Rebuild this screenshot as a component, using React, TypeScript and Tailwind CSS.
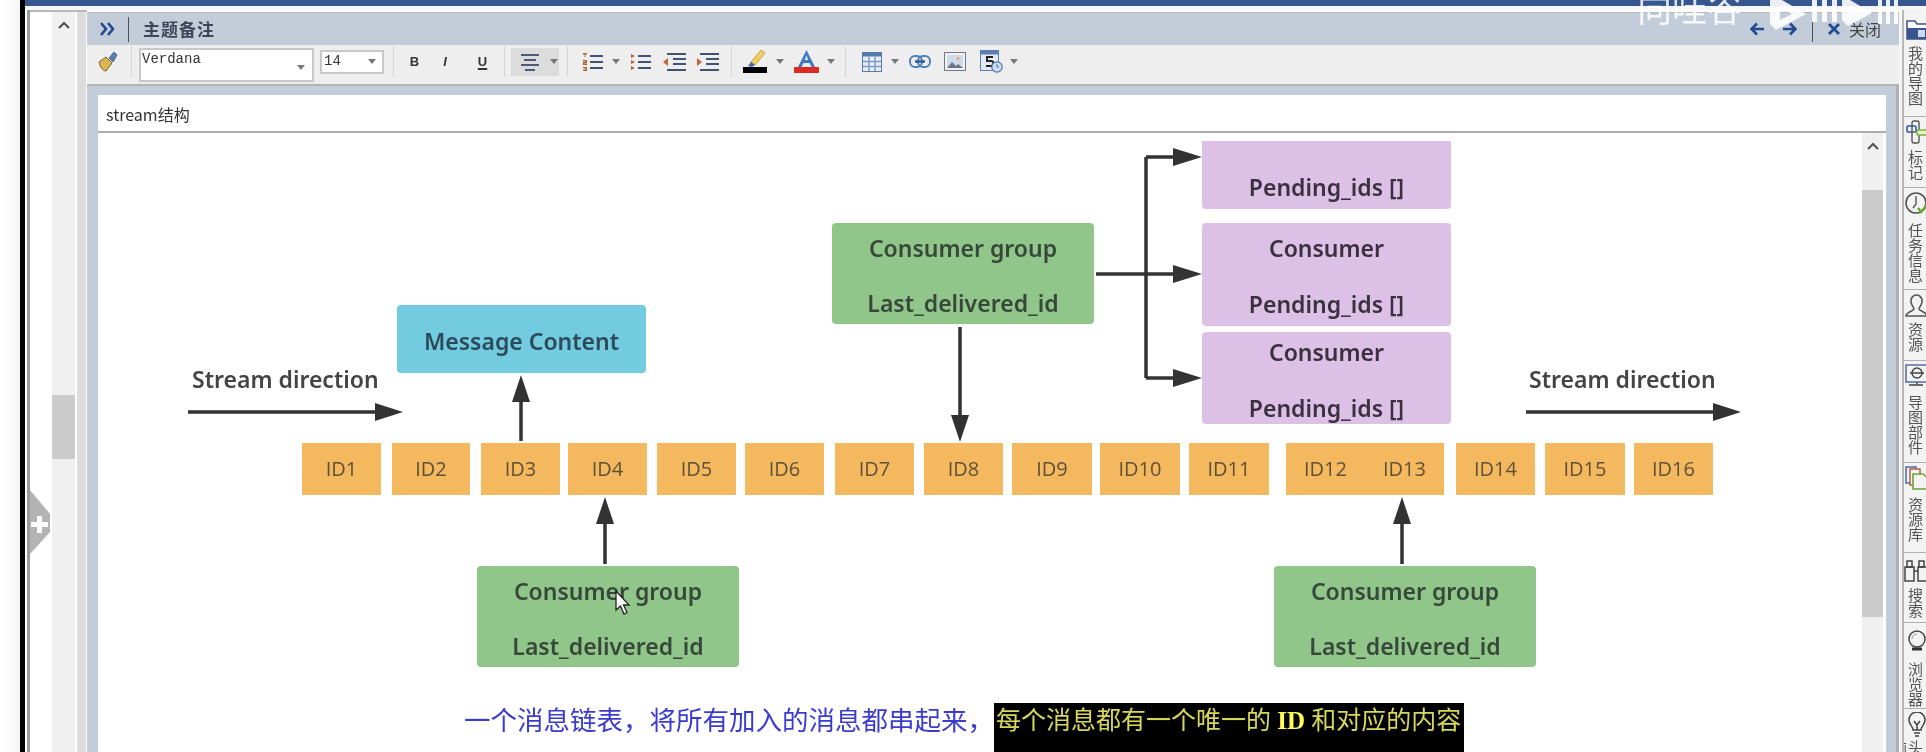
import React from "react";

const Caret = ({ className = "" }: { className?: string }) => (
  <svg width="8" height="5" viewBox="0 0 8 5" className={`shrink-0 ${className}`}><path d="M0 0h8L4 5z" fill="#777" /></svg>
);
const Sep = ({ className = "" }: { className?: string }) => <div className={`w-px h-[31px] bg-[#d4d4d4] shrink-0 ${className}`} />;

const Broom = () => (
  <svg width="20" height="22" viewBox="0 0 20 22" className="ml-[11px] shrink-0">
    <path d="M1 11l7-5 6 6-6 8C5 20 2 16 1 11z" fill="#d9b64f" stroke="#776330" strokeWidth="1" />
    <path d="M11 7l5-6 3 3-4 7z" fill="#5f7fb0" stroke="#36527f" strokeWidth="0.8" />
  </svg>
);
const Lines = ({ kind }: { kind: "center" | "num" | "bul" | "out" | "in" }) => {
  if (kind === "center")
    return (
      <svg width="20" height="20" viewBox="0 0 20 20" className="ml-[9px] shrink-0" stroke="#4a5c78" strokeWidth="2">
        <path d="M1 3h18M4 8h12M1 13h18M5 18h10" />
      </svg>
    );
  if (kind === "num" || kind === "bul")
    return (
      <svg width="21" height="20" viewBox="0 0 21 20" className="shrink-0">
        <g stroke="#3f5270" strokeWidth="2"><path d="M8 4h13M8 10h13M8 16h13" /></g>
        <g fill="#b5623a">
          {kind === "num" ? (
            <>
              <path d="M1 1h4v1.500H3.500V5h-1V2.500H1z" />
              <path d="M1 8h4v3H2.500v.500H5V13H1v-3h2.500v-.500H1z" />
              <path d="M1 15h4v4H1v-1h2.500v-.500H1.500v-1h2v-.500H1z" />
            </>
          ) : (
            <>
              <path d="M1 2l4 2-4 2z" />
              <path d="M1 8l4 2-4 2z" />
              <path d="M1 14l4 2-4 2z" />
            </>
          )}
        </g>
      </svg>
    );
  return (
    <svg width="23" height="20" viewBox="0 0 23 20" className="shrink-0">
      <g stroke="#3f5270" strokeWidth="2"><path d="M4 2h19M10 7h13M10 12h13M4 18h19" /></g>
      <path d={kind === "out" ? "M0 10l5-4v8z" : "M6 10L1 6v8z"} fill="#c2673a" />
    </svg>
  );
};
const Highlight = () => (
  <svg width="24" height="23" viewBox="0 0 24 23" className="shrink-0">
    <path d="M8 12L18 0l4 3-10 12z" fill="#efcf6a" stroke="#c9a53c" />
    <path d="M5 16l3-4 4 3-3 2z" fill="#3c69b0" />
    <rect y="17" width="24" height="6" fill="#000" />
  </svg>
);
const FontA = () => (
  <svg width="25" height="23" viewBox="0 0 25 23" className="shrink-0">
    <path d="M12.5 0L4 17h3.5l2-4h6l2 4H21zM10.8 10l1.7-4.5 1.7 4.5z" fill="#3e79c4" />
    <rect y="17" width="25" height="6" fill="#dd2a22" />
  </svg>
);
const TableIcon = () => (
  <svg width="20" height="20" viewBox="0 0 20 20" className="shrink-0">
    <rect x="0.5" y="0.5" width="19" height="19" fill="#e6eef8" stroke="#5679ab" />
    <rect x="0.5" y="0.5" width="19" height="4" fill="#5679ab" />
    <path d="M7 5v14M13 5v14M1 9.5h18M1 14.500h18" stroke="#7f9cc6" strokeWidth="1.500" />
  </svg>
);
const LinkIcon = () => (
  <svg width="22" height="13" viewBox="0 0 22 13" className="shrink-0" fill="none">
    <rect x="1" y="1" width="12" height="11" rx="5" stroke="#4c7dbd" strokeWidth="2" />
    <rect x="9" y="1" width="12" height="11" rx="5" stroke="#4c7dbd" strokeWidth="2" />
    <path d="M6 6.500h10" stroke="#2d5d9f" strokeWidth="2.500" />
  </svg>
);
const ImageIcon = () => (
  <svg width="22" height="19" viewBox="0 0 22 19" className="shrink-0">
    <rect x="0.5" y="0.5" width="21" height="18" fill="#eef1f6" stroke="#777" />
    <rect x="3" y="3" width="16" height="13" fill="#cfdcee" />
    <path d="M3 16l5-6 4 4 2-2 5 4z" fill="#6c7686" />
    <circle cx="14" cy="6.500" r="1.800" fill="#e4ab8a" />
  </svg>
);
const CalIcon = () => (
  <svg width="23" height="23" viewBox="0 0 23 23" className="shrink-0">
    <rect x="0.500" y="0.500" width="18" height="20" fill="#e4e9f2" stroke="#5e7db5" />
    <rect x="0.500" y="0.500" width="18" height="4" fill="#5e7db5" />
    <path d="M13 7H7v4h4a2 2 0 0 1 0 5H6" stroke="#222" strokeWidth="2" fill="none" />
    <circle cx="17" cy="17" r="5.200" fill="#cdddf0" stroke="#4f76ad" strokeWidth="1.200" />
    <path d="M17 14v3h2" stroke="#4f76ad" fill="none" />
  </svg>
);

const SideItem = ({ h, label, icon, textTop }: { h: string; label: string; icon: React.ReactNode; textTop: string }) => (
  <div className={`${h} border-b border-[#b0b0b0] flex flex-col items-start overflow-hidden shrink-0`}>
    {icon}
    <div className={`${textTop} ml-[3px] w-[16px] [writing-mode:vertical-rl] text-[15px] leading-[16px] text-[#555] font-['Noto_Sans_CJK_SC',sans-serif]`}>{label}</div>
  </div>
);

const cjk = "font-['Noto_Sans_CJK_SC',sans-serif]";
const boxText = "text-[23px] font-semibold font-['Noto_Sans','Open_Sans',sans-serif] whitespace-nowrap";

const ids = [
  ["ID1", "left-[204px] w-[79px]"],
  ["ID2", "left-[294px] w-[78px]"],
  ["ID3", "left-[383px] w-[79px]"],
  ["ID4", "left-[470px] w-[79px]"],
  ["ID5", "left-[559px] w-[79px]"],
  ["ID6", "left-[647px] w-[79px]"],
  ["ID7", "left-[737px] w-[79px]"],
  ["ID8", "left-[826px] w-[79px]"],
  ["ID9", "left-[914px] w-[80px]"],
  ["ID10", "left-[1002px] w-[80px]"],
  ["ID11", "left-[1091px] w-[80px]"],
  ["ID12", "left-[1188px] w-[79px]"],
  ["ID13", "left-[1267px] w-[79px]"],
  ["ID14", "left-[1358px] w-[79px]"],
  ["ID15", "left-[1447px] w-[80px]"],
  ["ID16", "left-[1536px] w-[79px]"],
];

const Group = ({ pos }: { pos: string }) => (
  <div className={`absolute ${pos} h-[101px] w-[262px] rounded-[4px] bg-[#90c68a] flex flex-col items-center text-[#37483a] ${boxText}`}>
    <div className="h-[26px] mt-[12px] leading-[26px]">Consumer group</div>
    <div className="h-[26px] mt-[29px] leading-[26px]">Last_delivered_id</div>
  </div>
);

const Consumer = ({ pos, gap, top, h }: { pos: string; gap: string; top: string; h: string }) => (
  <div className={`absolute ${pos} ${h} w-[249px] rounded-[4px] bg-[#dcc0e5] flex flex-col items-center text-[#3a3040] ${boxText}`}>
    <div className={`h-[26px] ${top} leading-[26px]`}>Consumer</div>
    <div className={`h-[26px] ${gap} leading-[26px]`}>Pending_ids []</div>
  </div>
);

export default function App() {
  return (
    <div className="relative flex h-[752px] w-[1926px] overflow-hidden bg-white blur-[0.6px]">
      <div className="w-[20px] shrink-0 bg-gradient-to-r from-white to-[#f6f6f6]" />
      <div className="w-[5px] shrink-0 bg-black" />
      <div className="flex min-w-0 flex-1 flex-col">
        <div className="h-[6px] shrink-0 bg-[#36568f]" />
        <div className="h-[4px] shrink-0 bg-[#f4f6fa]" />
        <div className="flex min-h-0 flex-1">
          {/* left panel */}
          <div className="flex w-[62px] shrink-0">
            <div className="ml-[2px] w-[3px] bg-[#9a9a9a]" />
            <div className="flex-1 flex border-t-2 border-[#b8b8b8]">
              <div className="w-[22px] bg-white" />
              <div className="flex w-[23px] flex-col items-center bg-[#f0f0f0]">
                <svg width="12" height="8" viewBox="0 0 12 8" className="mt-[9px]"><path d="M1 7l5-5 5 5" stroke="#555" strokeWidth="2.200" fill="none" /></svg>
                <div className="mt-[366px] h-[64px] w-full bg-[#cbcbcb]" />
              </div>
              <div className="w-[2px] bg-white" />
              <div className="w-[9px] bg-[#dcdcdc]" />
            </div>
          </div>
          {/* editor */}
          <div className="flex w-[1812px] shrink-0 flex-col">
            <div className="mt-[2px] flex h-[33px] shrink-0 items-center border-t border-[#b8b8b8] bg-[#c3cdd9]">
              <svg width="16" height="14" viewBox="0 0 16 14" className="ml-[12px]"><path d="M2 1l5 6-5 6M9 1l5 6-5 6" stroke="#1f4a8f" strokeWidth="2.600" fill="none" /></svg>
              <div className="ml-[13px] h-[25px] w-px bg-[#4a4f58]" />
              <div className={`ml-[14px] text-[17px] font-bold tracking-[1px] text-[#3c4658] ${cjk}`}>主题备注</div>
              <div className="flex-1" />
              <svg width="15" height="14" viewBox="0 0 15 14"><path d="M14 7H2M7 1.500L1.500 7 7 12.500" stroke="#1f4a8f" strokeWidth="2.600" fill="none" /></svg>
              <svg width="14" height="14" viewBox="0 0 14 14" className="ml-[18px]"><path d="M0 7h12M7 1.500L12.500 7 7 12.500" stroke="#1f4a8f" strokeWidth="2.600" fill="none" /></svg>
              <div className="ml-[15px] h-[25px] w-px bg-[#4a4f58]" />
              <svg width="12" height="12" viewBox="0 0 12 12" className="ml-[15px]"><path d="M1 1l10 10M11 1L1 11" stroke="#1f4a8f" strokeWidth="2.800" /></svg>
              <div className={`ml-[9px] mr-[18px] text-[16px] text-[#444] ${cjk}`}>关闭</div>
            </div>
            <div className="flex h-[41px] shrink-0 items-center border-b-2 border-[#b4b4b4] bg-[#eeeeee] pb-[6px]">
              <Broom />
              <Sep className="ml-[13px]" />
              <div className="ml-[7px] mt-[3px] flex h-[34px] w-[175px] shrink-0 items-start self-start border-2 border-[#c8c8c8] bg-white pl-[1px] pt-[2px] font-['Liberation_Mono',monospace] text-[14px] leading-[14px] text-[#333]">
                <span className="flex-1">Verdana</span>
                <Caret className="mr-[7px] mt-[13px]" />
              </div>
              <div className="ml-[6px] flex h-[24px] w-[64px] shrink-0 items-center border-2 border-[#c8c8c8] bg-white pl-[2px] font-['Liberation_Mono',monospace] text-[14px] text-[#333]">
                <span className="flex-1">14</span>
                <Caret className="mr-[6px]" />
              </div>
              <Sep className="ml-[9px]" />
              <div className="ml-[15px] w-[11px] text-center font-['Liberation_Sans',sans-serif] text-[13px] font-bold text-[#333]">B</div>
              <div className="ml-[22px] w-[6px] text-center font-['Liberation_Sans',sans-serif] text-[13px] font-bold italic text-[#333]">I</div>
              <div className="ml-[29px] w-[11px] text-center font-['Liberation_Sans',sans-serif] text-[13px] font-semibold text-[#333] underline decoration-2 underline-offset-2">U</div>
              <Sep className="ml-[16px]" />
              <div className="ml-[6px] flex h-[28px] w-[48px] shrink-0 items-center bg-[#dcdcdc]">
                <Lines kind="center" />
                <Caret className="ml-[10px]" />
              </div>
              <Sep className="ml-[8px]" />
              <div className="ml-[14px] shrink-0"><Lines kind="num" /></div>
              <Caret className="ml-[9px]" />
              <div className="ml-[10px] shrink-0"><Lines kind="bul" /></div>
              <div className="ml-[12px] shrink-0"><Lines kind="out" /></div>
              <div className="ml-[10px] shrink-0"><Lines kind="in" /></div>
              <Sep className="ml-[12px]" />
              <div className="ml-[11px] shrink-0"><Highlight /></div>
              <Caret className="ml-[9px]" />
              <div className="ml-[10px] shrink-0"><FontA /></div>
              <Caret className="ml-[8px]" />
              <Sep className="ml-[10px]" />
              <div className="ml-[16px] shrink-0"><TableIcon /></div>
              <Caret className="ml-[9px]" />
              <div className="ml-[10px] shrink-0"><LinkIcon /></div>
              <div className="ml-[13px] shrink-0"><ImageIcon /></div>
              <div className="ml-[14px] shrink-0"><CalIcon /></div>
              <Caret className="ml-[7px]" />
            </div>
            <div className="flex min-h-0 flex-1 flex-col border-r-[3px] border-[#b0b0b0] bg-[#c3cdd9] pl-[11px] pr-[10px] pt-[9px]">
              <div className="flex min-h-0 flex-1 flex-col bg-white">
                <div className={`flex h-[38px] shrink-0 items-center border-b-2 border-[#adadad] pl-[8px] pt-[2px] text-[16px] leading-none text-[#333] ${cjk}`}>stream结构</div>
                <div className="flex min-h-0 flex-1">
                  <div className="relative min-w-0 flex-1 overflow-hidden">
                    {/* arrows */}
                    <svg className="absolute left-0 top-0" width="1765" height="620" viewBox="98 133 1765 620">
                      <g stroke="#333" strokeWidth="3.500" fill="none">
                        <path d="M188 412H380M1526 412H1715M1096 274H1178M1146 157V378M1180 157H1146M1146 378H1180M960 327V420M521 441V400M605 564V522M1402 564V522" />
                      </g>
                      <g fill="#333">
                        <path d="M403 412l-28-9v18z" />
                        <path d="M1741 412l-28-9v18z" />
                        <path d="M1202 157l-29-9v18z" />
                        <path d="M1202 274l-29-9v18z" />
                        <path d="M1202 378l-29-9v18z" />
                        <path d="M960 442l-9-27h18z" />
                        <path d="M521 375l-9 27h18z" />
                        <path d="M605 497l-9 27h18z" />
                        <path d="M1402 497l-9 27h18z" />
                      </g>
                    </svg>
                    <div className={`absolute left-[94px] top-[229px] text-[#444] ${boxText}`}>Stream direction</div>
                    <div className={`absolute left-[1431px] top-[229px] text-[#444] ${boxText}`}>Stream direction</div>

                    <div className={`absolute left-[299px] top-[172px] flex h-[68px] w-[249px] items-center justify-center rounded-[4px] bg-[#72cbdf] pt-[4px] text-[#2c4a5a] ${boxText}`}>Message Content</div>

                    {ids.map(([t, pos]) => (
                      <div key={t} className={`absolute top-[310px] flex h-[52px] items-center justify-center bg-[#f4b95f] font-['Open_Sans',sans-serif] text-[20px] text-[#5e5039] ${pos}`}>{t}</div>
                    ))}

                    <Group pos="left-[734px] top-[90px]" />
                    <Group pos="left-[379px] top-[433px]" />
                    <Group pos="left-[1176px] top-[433px]" />

                    <div className="absolute left-[1104px] top-[8px] h-[68px] w-[249px] overflow-hidden rounded-b-[4px] bg-[#dcc0e5]">
                      <div className={`absolute left-0 top-[-22px] h-[26px] w-full text-center leading-[26px] text-[#3a3040] ${boxText}`}>Consumer</div>
                      <div className={`absolute left-0 top-[33px] h-[26px] w-full text-center leading-[26px] text-[#3a3040] ${boxText}`}>Pending_ids []</div>
                    </div>
                    <Consumer pos="left-[1104px] top-[90px]" h="h-[103px]" top="mt-[12px]" gap="mt-[30px]" />
                    <Consumer pos="left-[1104px] top-[199px]" h="h-[92px]" top="mt-[7px]" gap="mt-[30px]" />

                    <svg className="absolute left-[517px] top-[457px]" width="17" height="26" viewBox="0 0 17 26">
                      <path d="M1 1v19l4.500-4 3.500 8 3-1.500-3.500-7.500H14z" fill="#fff" stroke="#222" strokeWidth="1.300" />
                    </svg>

                    <div className={`absolute left-[366px] top-[564px] flex h-[49px] items-center whitespace-nowrap font-['Liberation_Serif','Noto_Sans_CJK_SC',serif] text-[26.5px] text-[#3b3bd0]`}>一个消息链表，将所有加入的消息都串起来，</div>
                    <div className={`absolute left-[896px] top-[570px] h-[49px] w-[470px] whitespace-nowrap bg-black pl-[2px] pt-[1px] font-['Liberation_Serif','Noto_Sans_CJK_SC',serif] text-[25px] leading-[34px] text-[#d7d75c]`}>每个消息都有一个唯一的&nbsp;<span className="font-bold text-[#ffff55]">ID</span>&nbsp;和对应的内容</div>
                  </div>
                  <div className="mr-[3px] flex w-[21px] shrink-0 flex-col bg-[#f0f0f0]">
                    <div className="flex h-[57px] shrink-0 justify-center pt-[9px]">
                      <svg width="12" height="8" viewBox="0 0 12 8"><path d="M1 7l5-5 5 5" stroke="#555" strokeWidth="2.200" fill="none" /></svg>
                    </div>
                    <div className="h-[427px] shrink-0 bg-[#cbcbcb]" />
                  </div>
                </div>
              </div>
            </div>
          </div>
          <div className="w-[3px] shrink-0 bg-[#f5f5f5]" />
          {/* sidebar */}
          <div className="flex min-w-0 flex-1 flex-col border-l-2 border-[#b8b8b8] bg-[#f3f3f3]">
            <SideItem h="h-[107px]" label="我的导图" textTop="mt-[6px]" icon={
              <svg width="22" height="22" viewBox="0 0 22 22" className="ml-[2px] mt-[8px] shrink-0"><path d="M1 3h8l2 3h11v15H1z" fill="#fff" stroke="#39558f" strokeWidth="1.500" /><rect x="1" y="10" width="21" height="11" fill="#39558f" /><rect x="12" y="12" width="7" height="7" fill="#cfd9ea" /></svg>
            } />
            <SideItem h="h-[71px]" label="标记" textTop="mt-[6px]" icon={
              <svg width="22" height="24" viewBox="0 0 22 24" className="ml-[2px] mt-[3px] shrink-0" fill="none"><rect x="1" y="6" width="9" height="6" rx="1" stroke="#2c5aa6" strokeWidth="1.600" /><rect x="6" y="1" width="7" height="22" rx="2" stroke="#555" strokeWidth="1.400" /><rect x="11" y="10" width="11" height="5" rx="1" stroke="#7db03c" strokeWidth="1.600" fill="#e6f2c8" /></svg>
            } />
            <SideItem h="h-[102px]" label="任务信息" textTop="mt-[8px]" icon={
              <svg width="23" height="24" viewBox="0 0 23 24" className="ml-[1px] mt-[3px] shrink-0" fill="none"><circle cx="11" cy="12" r="10" stroke="#555" strokeWidth="1.600" /><path d="M11 5v8l-3 4" stroke="#555" strokeWidth="1.400" /><path d="M13 17l3 4 6-7" stroke="#6aa52f" strokeWidth="2.400" /></svg>
            } />
            <SideItem h="h-[71px]" label="资源" textTop="mt-[4px]" icon={
              <svg width="23" height="24" viewBox="0 0 23 24" className="ml-[1px] mt-[4px] shrink-0" fill="none" stroke="#555" strokeWidth="1.600"><path d="M7 11c-3-6 1-10 4.500-10S19 5 16 11c-1 2-2 3-2 4 0 2 8 3 8 7H1c0-4 8-5 8-7 0-1-1-2-2-4z" /></svg>
            } />
            <SideItem h="h-[102px]" label="导图部件" textTop="mt-[9px]" icon={
              <svg width="23" height="22" viewBox="0 0 23 22" className="ml-[1px] mt-[3px] shrink-0" fill="none"><rect x="1" y="1" width="22" height="17" stroke="#47639b" strokeWidth="1.400" /><circle cx="12" cy="9" r="5" stroke="#444" strokeWidth="1.400" /><path d="M5 9h14M12 18v3M4 21h14" stroke="#444" strokeWidth="1.400" /></svg>
            } />
            <SideItem h="h-[90px]" label="资源库" textTop="mt-[7px]" icon={
              <svg width="23" height="24" viewBox="0 0 23 24" className="ml-[1px] mt-[3px] shrink-0" fill="none"><rect x="1" y="1" width="10" height="16" stroke="#3a5fa6" strokeWidth="1.400" /><rect x="5" y="3" width="10" height="16" stroke="#b5523a" strokeWidth="1.400" fill="#f3f3f3" /><path d="M8 8h10l5 4v11H8z" stroke="#6aa52f" strokeWidth="1.600" fill="#f3f3f3" /></svg>
            } />
            <SideItem h="h-[70px]" label="搜索" textTop="mt-[5px]" icon={
              <svg width="24" height="23" viewBox="0 0 24 23" className="mt-[7px] shrink-0" fill="none" stroke="#444" strokeWidth="1.500"><rect x="3" y="1" width="5" height="6" /><rect x="15" y="1" width="5" height="6" /><rect x="1" y="7" width="9" height="14" /><rect x="14" y="7" width="9" height="14" /><path d="M10 11h4" /></svg>
            } />
            <SideItem h="h-[86px]" label="浏览器" textTop="mt-[9px]" icon={
              <svg width="20" height="24" viewBox="0 0 20 24" className="ml-[3px] mt-[6px] shrink-0" fill="none"><circle cx="10" cy="10" r="8" stroke="#444" strokeWidth="1.500" /><path d="M5 20h10" stroke="#333" strokeWidth="3" /><path d="M5 10a5 5 0 0 1 5-5" stroke="#999" /></svg>
            } />
            <SideItem h="h-[60px]" label="头脑" textTop="mt-[2px]" icon={
              <svg width="20" height="26" viewBox="0 0 20 26" className="ml-[3px] mt-[3px] shrink-0" fill="none" stroke="#444" strokeWidth="1.500"><path d="M6 18c0-4-4-5-4-10a8 8 0 0 1 16 0c0 5-4 6-4 10z" /><path d="M7 9l3 4 3-4M10 13v5M7 21h6M8 24h4" /></svg>
            } />
          </div>
        </div>
      </div>

      {/* plus tab */}
      <svg className="absolute left-[30px] top-[490px]" width="21" height="64" viewBox="0 0 21 64">
        <path d="M0 0l20 24v18L0 64z" fill="#b3b3b3" />
        <path d="M8 15h5v6h6v5h-6v6H8v-6H2v-5h6z" transform="translate(-1 11)" fill="#fff" />
      </svg>

      {/* watermark */}
      <div className={`absolute left-[1637px] top-[-13px] text-[35px] leading-[40px] text-white/85 ${cjk}`}>向哇谷</div>
      <svg className="absolute left-[1768px] top-0" width="132" height="32" viewBox="0 0 132 32">
        <g fill="#fff" fillOpacity="0.9">
          <path d="M2 0h12l24 14L8 30 2 24zM12 8v12l12-6z" fillRule="evenodd" />
          <path d="M44 0h5v22h-5zM54 0h5v22h-5zM64 0h5v22h-5z" />
          <path d="M74 0h8l22 13-24 13-6-6z" />
          <path d="M110 0h4v24h-4zM118 0h4v24h-4zM126 0h4v24h-4z" />
        </g>
      </svg>
    </div>
  );
}
